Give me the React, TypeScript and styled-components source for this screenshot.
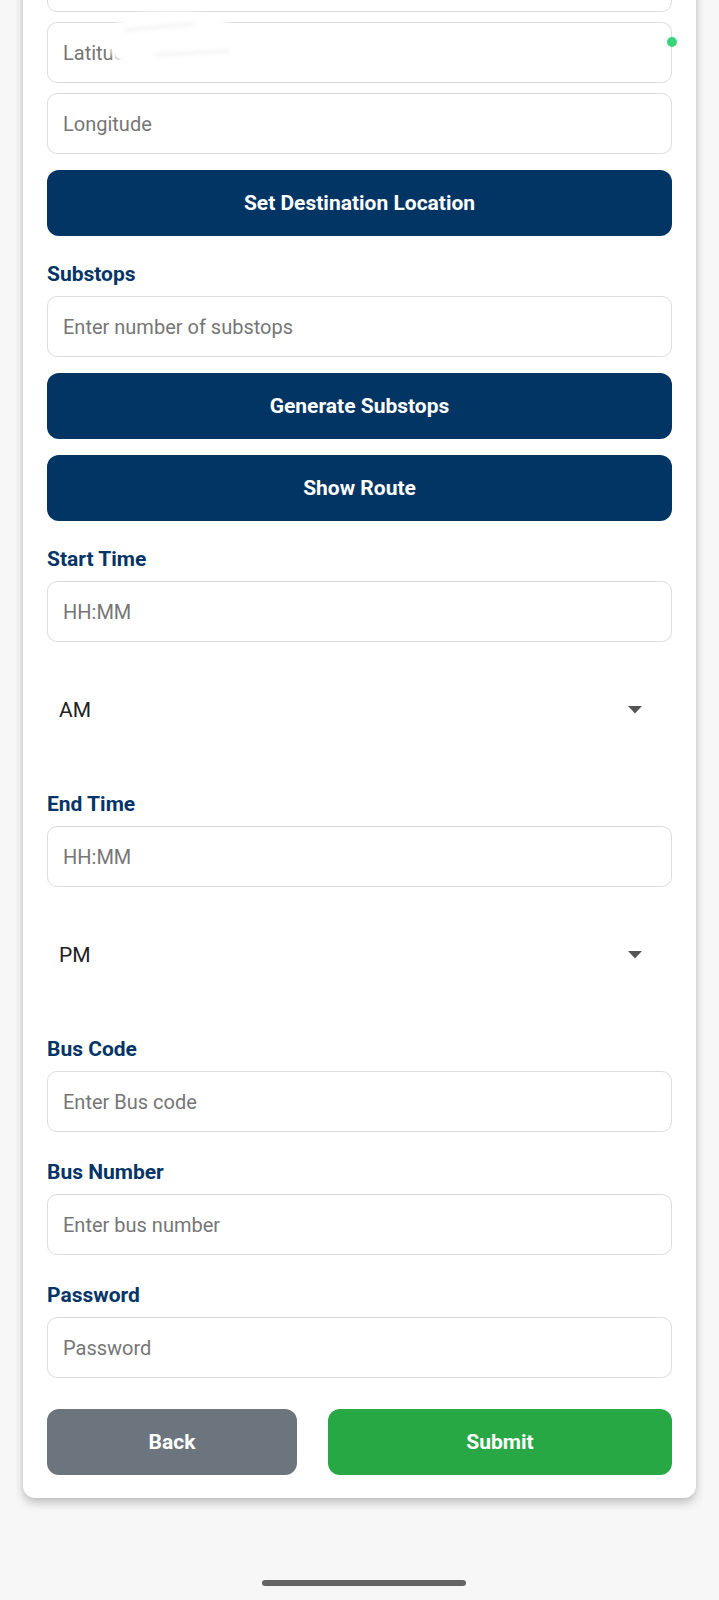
import React from "react";
import styled, { createGlobalStyle } from "styled-components";

const GlobalStyle = createGlobalStyle`
  html, body {
    margin: 0;
    padding: 0;
    background: #f7f7f7;
  }
  body {
    font-family: Roboto, "Noto Sans", Arial, sans-serif;
  }
  *, *::before, *::after {
    box-sizing: border-box;
  }
`;

const Screen = styled.div`
  position: relative;
  width: 719px;
  min-height: 1600px;
  background: #f7f7f7;
  overflow: hidden;
`;

const Card = styled.div`
  margin: -73px 23px 0 23px;
  padding: 24px 24px 23px;
  background: #ffffff;
  border-radius: 0 0 12px 12px;
  box-shadow: 0 5px 10px rgba(0, 0, 0, 0.22), 0 0 4px rgba(0, 0, 0, 0.06);
  display: flex;
  flex-direction: column;
`;

const FieldLabel = styled.div<{ $gap: number }>`
  margin-top: ${(p) => p.$gap}px;
  margin-bottom: 10px;
  font-family: Roboto, "Noto Sans", Arial, sans-serif;
  font-weight: 700;
  font-size: 21px;
  line-height: 24px;
  color: #043566;
`;

const InputWrap = styled.div<{ $gap?: number }>`
  position: relative;
  margin-top: ${(p) => p.$gap ?? 0}px;
`;

const TextInput = styled.input`
  display: block;
  width: 100%;
  height: 61px;
  margin: 0;
  padding: 0 15px;
  border: 1px solid #dcdcdc;
  border-radius: 10px;
  background: #ffffff;
  font-family: Roboto, "Noto Sans", Arial, sans-serif;
  font-weight: 400;
  font-size: 20px;
  color: #222222;
  outline: none;
  &::placeholder {
    color: #767676;
    opacity: 1;
  }
`;

const Smudge = styled.div`
  position: absolute;
  left: 63px;
  top: -10px;
  width: 132px;
  height: 60px;
  background: #ffffff;
  border-radius: 40% 50% 45% 40%;
  filter: blur(2px);
  &::before,
  &::after {
    content: "";
    position: absolute;
    height: 2px;
    border-radius: 2px;
    background: rgba(0, 0, 0, 0.08);
  }
  &::before {
    left: 14px;
    top: 14px;
    width: 70px;
    transform: rotate(-6deg);
  }
  &::after {
    left: 44px;
    top: 40px;
    width: 76px;
    transform: rotate(-3deg);
  }
`;

type Tone = "primary" | "secondary" | "success";

const toneColor: Record<Tone, string> = {
  primary: "#023564",
  secondary: "#6c757d",
  success: "#28a745",
};

const ActionButton = styled.button<{ $tone: Tone; $gap?: number }>`
  display: flex;
  align-items: center;
  justify-content: center;
  width: 100%;
  height: 66px;
  margin: ${(p) => p.$gap ?? 0}px 0 0 0;
  padding: 0;
  border: none;
  border-radius: 12px;
  background: ${(p) => toneColor[p.$tone]};
  color: #ffffff;
  font-family: Roboto, "Noto Sans", Arial, sans-serif;
  font-weight: 700;
  font-size: 21px;
  cursor: pointer;
`;

const PickerRow = styled.div<{ $gap: number }>`
  display: flex;
  align-items: center;
  justify-content: space-between;
  height: 103px;
  margin-top: ${(p) => p.$gap}px;
  padding: 0 30px 0 12px;
  font-family: Roboto, "Noto Sans", Arial, sans-serif;
  font-size: 21px;
  color: #212121;
`;

const ButtonRow = styled.div`
  display: grid;
  grid-template-columns: 250px 1fr;
  column-gap: 31px;
  margin-top: 31px;
`;

const HomeBar = styled.div`
  width: 204px;
  height: 6px;
  margin: 82px 0 0 262px;
  border-radius: 3px;
  background: #656565;
`;

const PrivacyDot = styled.div`
  position: absolute;
  left: 667px;
  top: 37px;
  width: 10px;
  height: 10px;
  border-radius: 50%;
  background: #38d47c;
`;

const Caret = () => (
  <svg width="14" height="8" viewBox="0 0 14 8" aria-hidden="true">
    <polygon points="0,0 14,0 7,7.5" fill="#555555" />
  </svg>
);

const Picker = ({ value, gap }: { value: string; gap: number }) => (
  <PickerRow $gap={gap}>
    <span>{value}</span>
    <Caret />
  </PickerRow>
);

export default function App() {
  return (
    <>
      <GlobalStyle />
      <Screen>
        <Card>
          <InputWrap>
            <TextInput readOnly placeholder="Destination" />
          </InputWrap>
          <InputWrap $gap={10}>
            <TextInput readOnly placeholder="Latitude" />
            <Smudge />
          </InputWrap>
          <InputWrap $gap={10}>
            <TextInput readOnly placeholder="Longitude" />
          </InputWrap>
          <ActionButton $tone="primary" $gap={16}>
            Set Destination Location
          </ActionButton>

          <FieldLabel $gap={26}>Substops</FieldLabel>
          <InputWrap>
            <TextInput readOnly placeholder="Enter number of substops" />
          </InputWrap>
          <ActionButton $tone="primary" $gap={16}>
            Generate Substops
          </ActionButton>
          <ActionButton $tone="primary" $gap={16}>
            Show Route
          </ActionButton>

          <FieldLabel $gap={26}>Start Time</FieldLabel>
          <InputWrap>
            <TextInput readOnly placeholder="HH:MM" />
          </InputWrap>
          <Picker value="AM" gap={16} />

          <FieldLabel $gap={31}>End Time</FieldLabel>
          <InputWrap>
            <TextInput readOnly placeholder="HH:MM" />
          </InputWrap>
          <Picker value="PM" gap={16} />

          <FieldLabel $gap={31}>Bus Code</FieldLabel>
          <InputWrap>
            <TextInput readOnly placeholder="Enter Bus code" />
          </InputWrap>

          <FieldLabel $gap={28}>Bus Number</FieldLabel>
          <InputWrap>
            <TextInput readOnly placeholder="Enter bus number" />
          </InputWrap>

          <FieldLabel $gap={28}>Password</FieldLabel>
          <InputWrap>
            <TextInput readOnly type="password" placeholder="Password" />
          </InputWrap>

          <ButtonRow>
            <ActionButton $tone="secondary">Back</ActionButton>
            <ActionButton $tone="success">Submit</ActionButton>
          </ButtonRow>
        </Card>
        <HomeBar />
        <PrivacyDot />
      </Screen>
    </>
  );
}
